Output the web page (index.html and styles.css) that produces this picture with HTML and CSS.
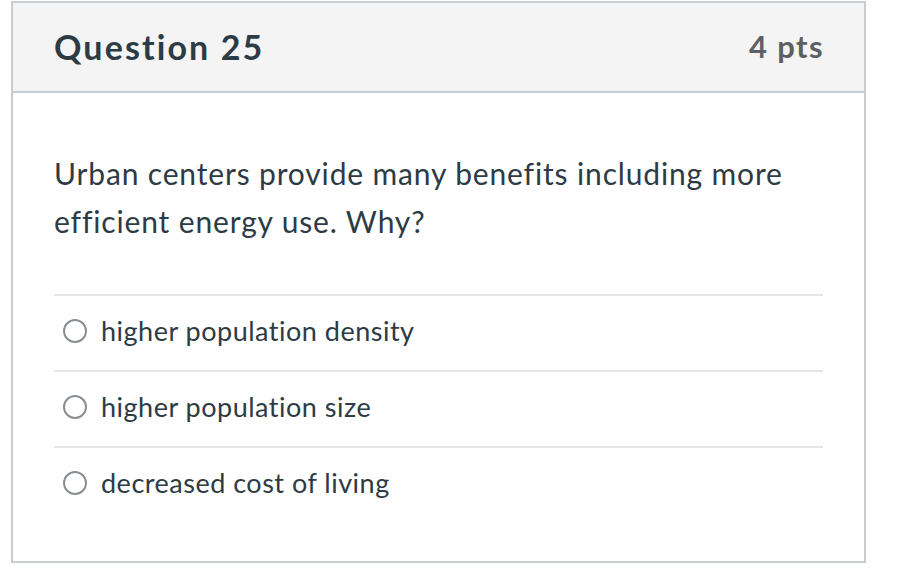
FILE: index.html
```html
<!DOCTYPE html>
<html>
<head>
<meta charset="utf-8">
<link rel="stylesheet" href="styles.css">
</head>
<body>
<div class="card">
  <div class="header">
    <h2 class="title">Question 25</h2>
    <div class="pts">4 pts</div>
  </div>
  <div class="content">
    <p class="question">Urban centers provide many benefits including more efficient energy use. Why?</p>
    <div class="answers">
      <label class="answer"><span class="radio"></span><span class="label">higher population density</span></label>
      <label class="answer"><span class="radio"></span><span class="label">higher population size</span></label>
      <label class="answer"><span class="radio"></span><span class="label">decreased cost of living</span></label>
    </div>
  </div>
</div>
</body>
</html>
```

FILE: styles.css
```css
html, body {
  margin: 0;
  padding: 0;
  background: #ffffff;
}
body {
  font-family: Lato, "Open Sans", sans-serif;
  color: #2d3b45;
  padding: 1px 0 0 11px;
}
.card {
  width: 851px;
  height: 558px;
  border: 2px solid #c7cdd1;
  box-sizing: content-box;
}
.header {
  background: #f4f4f4;
  border-bottom: 2px solid #c7cdd1;
  display: flex;
  align-items: center;
  justify-content: space-between;
  padding: 0 41px 2px 41px;
  box-sizing: border-box;
  height: 90px;
}
.title {
  margin: 0;
  font-size: 34px;
  font-weight: 700;
  letter-spacing: 2.1px;
  color: #2d3b45;
}
.pts {
  font-size: 31px;
  font-weight: 700;
  letter-spacing: 1.4px;
  color: #5b6065;
  margin-right: -1px;
}
.content {
  padding: 56px 41px 0 41px;
}
.question {
  margin: 0 0 49px 0;
  font-size: 30px;
  letter-spacing: 0.85px;
  line-height: 48px;
}
.answers {
  border-top: 2px solid #e6e6e6;
}
.answer {
  display: flex;
  align-items: center;
  border-bottom: 2px solid #e6e6e6;
  padding: 0 0 5px 9px;
  box-sizing: content-box;
  height: 69px;
  gap: 14px;
}
.answer:last-child {
  border-bottom: none;
}
.radio {
  width: 24px;
  height: 24px;
  border: 2px solid #8a8f94;
  border-radius: 50%;
  box-sizing: border-box;
  flex: none;
}
.label {
  font-size: 27px;
  letter-spacing: 0.5px;
  color: #2d3b45;
}
```
